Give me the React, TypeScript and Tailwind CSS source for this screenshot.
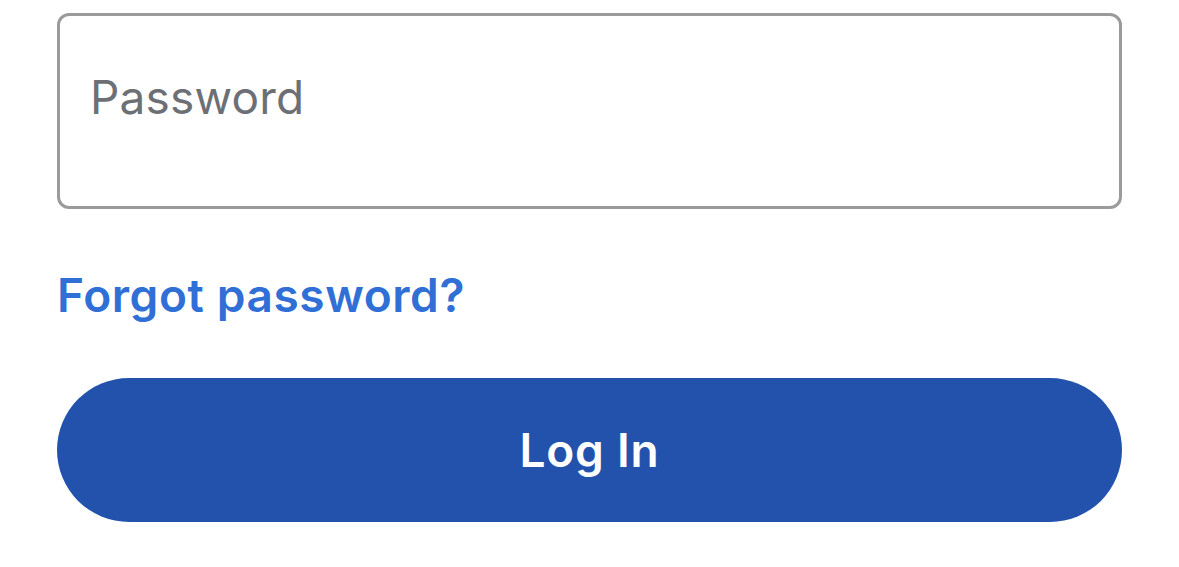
import React from 'react';

export default function App() {
  return (
    <div className="min-h-screen bg-white px-[57px] pt-[13px]" style={{ fontFamily: 'Inter, "Noto Sans", sans-serif' }}>
      <input
        type="password"
        placeholder="Password"
        className="box-border block h-[196px] w-full rounded-[12px] border-[3px] border-[#9b9b9b] bg-white pb-[29px] pl-[30px] pr-6 pt-0 text-[46px] tracking-[0.2px] text-[#1f2328] outline-none placeholder:text-[#6c7075]"
      />
      <div className="mt-[58px]">
        <a href="#" className="text-[46px] font-semibold leading-[56px] tracking-[0.6px] text-[#2f6fd6]">
          Forgot password?
        </a>
      </div>
      <button
        type="button"
        className="mt-[55px] flex h-[144px] w-full items-center justify-center rounded-full bg-[#2352ad] text-[46px] font-semibold tracking-[0.8px] text-white"
      >
        Log In
      </button>
    </div>
  );
}
